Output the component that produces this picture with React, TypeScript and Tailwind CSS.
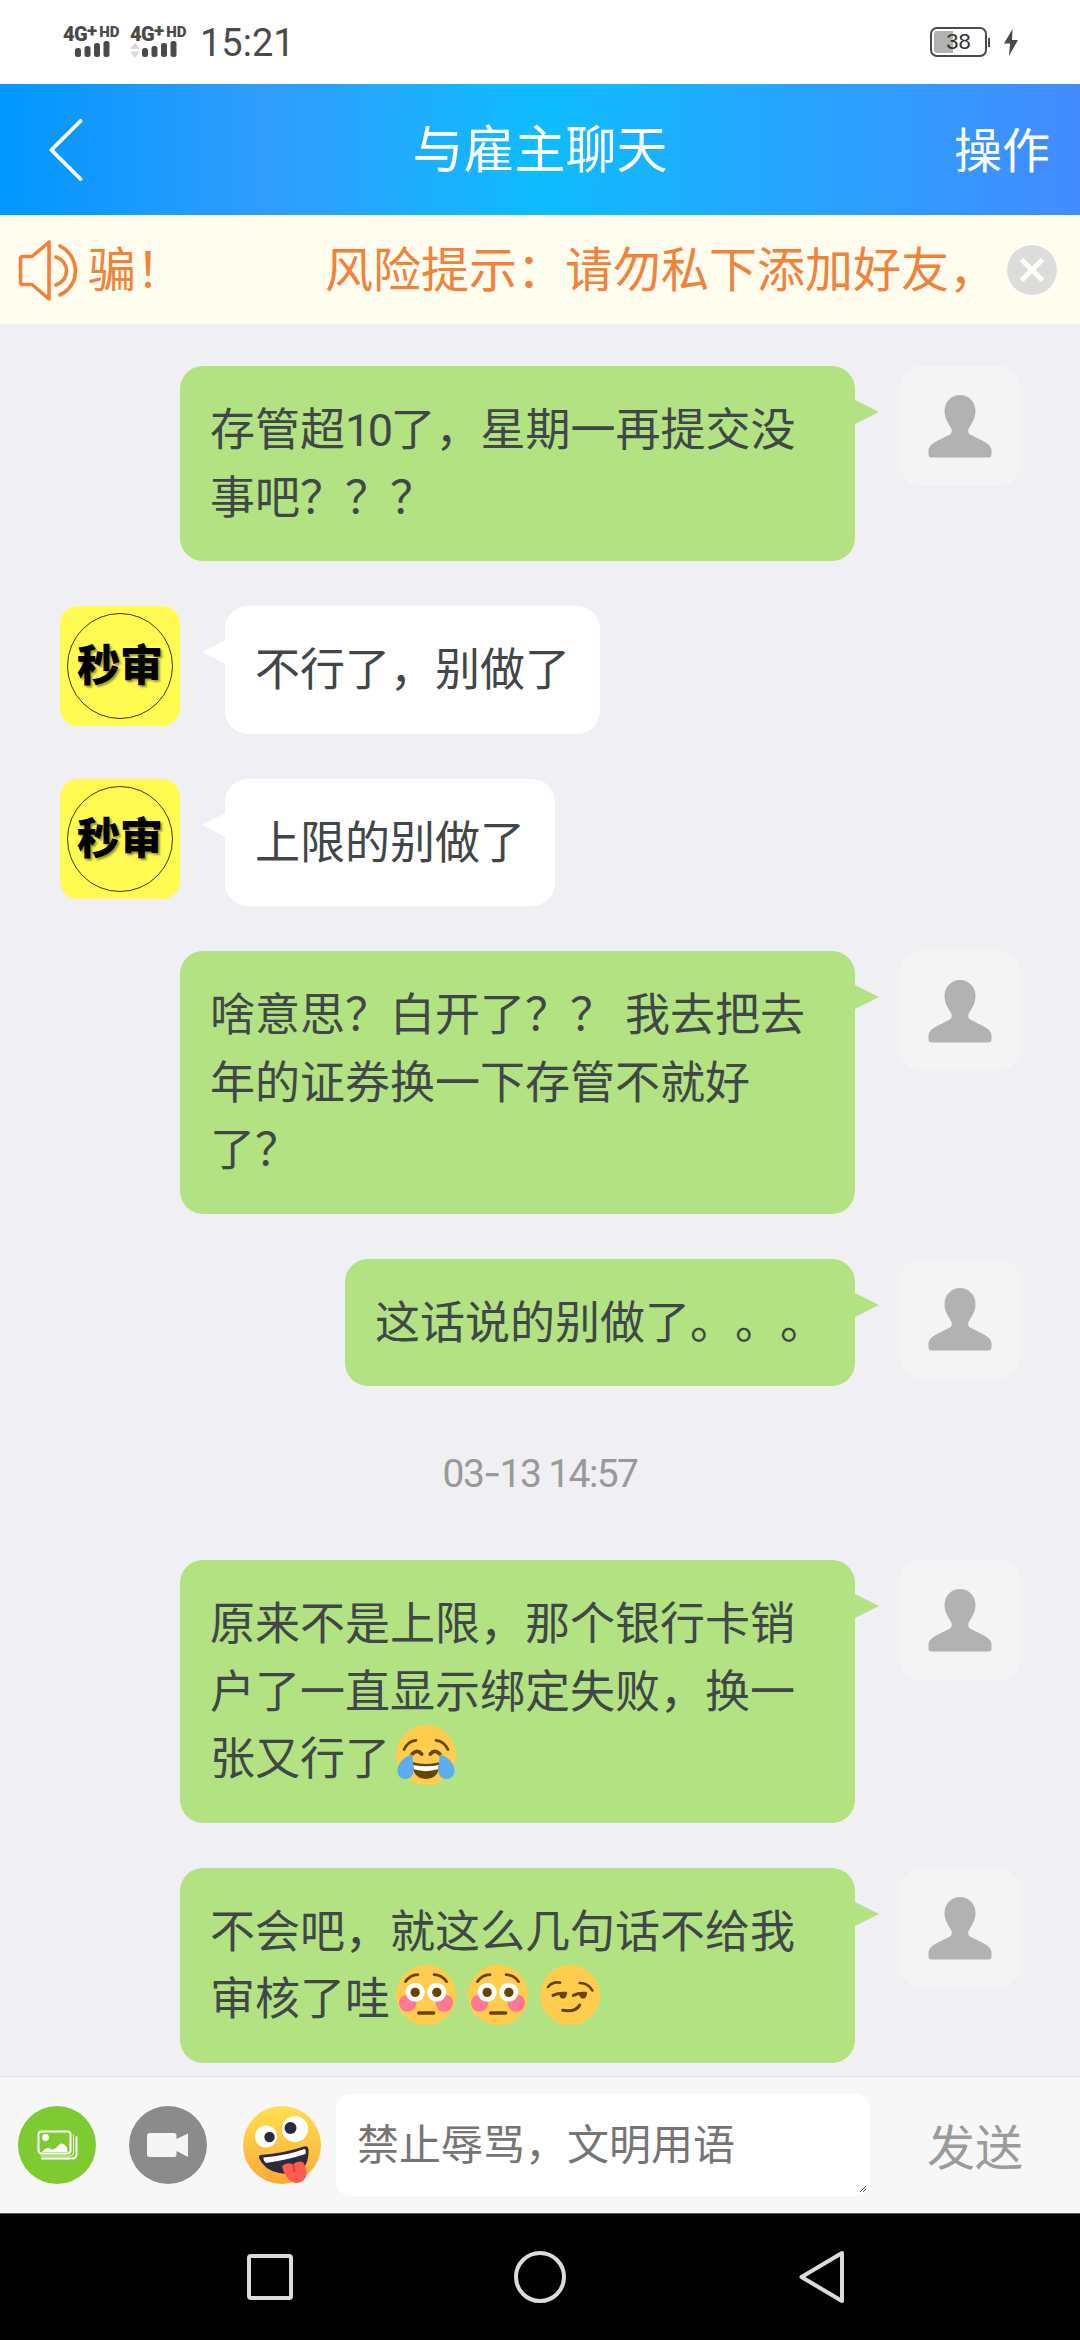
import type { ReactNode } from "react";

const Brows = ({ d }: { d: string }) => (
  <path d={d} fill="none" stroke="#664500" strokeWidth="1.6" strokeLinecap="round" />
);

function Emoji({ children }: { children: ReactNode }) {
  return (
    <svg viewBox="0 0 36 36" className="mx-[6px] mt-[3px] inline-block h-[60px] w-[60px] align-top">
      <circle cx="18" cy="18" r="18" fill="#ffcc4d" />
      {children}
    </svg>
  );
}

const Joy = () => (
  <Emoji>
    <Brows d="M4.800 14.800Q7.400 9.400 12 9.200M31.200 14.800Q28.600 9.400 24 9.200" />
    <path
      d="M9.600 17.600Q12.600 14.200 15.400 17.400M20.600 17.400Q23.400 14.200 26.400 17.600"
      fill="none"
      stroke="#664500"
      strokeWidth="2.200"
      strokeLinecap="round"
    />
    <path d="M10 22.400Q18 24.400 26 22.400C26.400 28.500 23.600 32.400 18 32.400S9.600 28.500 10 22.400Z" fill="#664500" />
    <path d="M10.300 24Q18 25.600 25.700 24L25.300 26.600Q18 28.800 10.700 26.600Z" fill="#fff" />
    <path d="M9.800 17.400C4 19.600 .8 23.400 .9 27.800C1 33.400 9 34.200 10.400 28.600C11 25.600 9.800 21.400 9.800 17.400Z" fill="#5dadec" />
    <path d="M26.200 17.400C32 19.600 35.200 23.400 35.100 27.800C35 33.400 27 34.200 25.600 28.600C25 25.600 26.200 21.400 26.200 17.400Z" fill="#5dadec" />
  </Emoji>
);

const Flushed = () => (
  <Emoji>
    <Brows d="M5.600 10Q8.400 6 13.200 5.800M30.400 10Q27.600 6 22.800 5.800" />
    <circle cx="7" cy="22.800" r="5.200" fill="#ff7892" />
    <circle cx="29" cy="22.800" r="5.200" fill="#ff7892" />
    <circle cx="11.500" cy="16.400" r="5.700" fill="#fff" />
    <circle cx="24.500" cy="16.400" r="5.700" fill="#fff" />
    <circle cx="11.500" cy="16.400" r="2.800" fill="#664500" />
    <circle cx="24.500" cy="16.400" r="2.800" fill="#664500" />
    <path d="M13.600 28.800H22.600" stroke="#664500" strokeWidth="2" strokeLinecap="round" />
  </Emoji>
);

const Smirk = () => (
  <Emoji>
    <Brows d="M4.800 13.200Q7.600 9.800 12 10.600M23.800 10.800Q28.600 10.600 31.400 15.200" />
    <g fill="none" stroke="#664500" strokeWidth="1.800" strokeLinecap="round">
      <path d="M7.800 18.200Q11 16.600 15.400 17" />
      <path d="M20 18.200Q23.200 16.600 27.400 17" />
      <path d="M13.600 27.200Q21.600 28.400 23.800 24" />
    </g>
    <path d="M11.400 16.800H16.200Q16 20.200 13.800 20.200T11.400 16.800ZM23.400 16.800H28.200Q28 20.200 25.800 20.200T23.400 16.800Z" fill="#664500" />
  </Emoji>
);

function ZanyFace() {
  return (
    <svg viewBox="0 0 78 78" className="ml-[36px] h-[78px] w-[78px] shrink-0">
      <defs>
        <linearGradient id="zany" x1="0" y1="0" x2="0" y2="1">
          <stop offset="0" stopColor="#ffdf4f" />
          <stop offset="0.45" stopColor="#fdc746" />
          <stop offset="1" stopColor="#ffa834" />
        </linearGradient>
      </defs>
      <circle cx="39" cy="39" r="39" fill="url(#zany)" />
      <circle cx="23" cy="30.500" r="11" fill="#fff" />
      <circle cx="52" cy="23" r="13" fill="#fff" />
      <circle cx="26.500" cy="31" r="5.200" fill="#2b2b3d" />
      <circle cx="47.500" cy="22" r="6" fill="#2b2b3d" />
      <path d="M18 49Q42 47 61 40.500Q65.500 39.500 65.500 44Q66 60 56 65Q46 69 36 67Q21 64 16 52Q15.500 49 18 49Z" fill="#2b2b3d" />
      <path d="M20.500 51.500Q44 49.500 61.500 43Q63.500 44 62.500 48Q44 54 23 57Q20 54 20.500 51.500Z" fill="#fff" />
      <path d="M39 60Q44 55.500 50 58.500Q54 54.500 60 56Q65 64 63 71Q59 77.500 52 77Q42 74 39 60Z" fill="#ff5b50" />
      <path d="M50 58.500L51.500 65" stroke="#d93a3a" strokeWidth="1.800" strokeLinecap="round" />
    </svg>
  );
}

function SelfAvatar() {
  return (
    <div className="ml-[45px] h-[120px] w-[120px] shrink-0 rounded-[21px] bg-[#f4f4f5]">
      <svg viewBox="0 0 120 120" className="h-full w-full">
        <path
          d="M60 29C69 29 75.500 36 75.500 45C75.500 52 72 57 69 62C67.500 65 68 67.500 71 69L84 75.500Q91 79.500 91.500 84V88.500Q91.500 91.500 88.500 91.500H31.500Q28.500 91.500 28.500 88.500V84Q29 79.500 36 75.500L49 69C52 67.500 52.500 65 51 62C48 57 44.500 52 44.500 45C44.500 36 51 29 60 29Z"
          fill="#b2b2b2"
        />
      </svg>
    </div>
  );
}

function EmployerAvatar() {
  return (
    <div className="mr-[45px] flex h-[120px] w-[120px] shrink-0 items-center justify-center rounded-[18px] bg-[#fffb50]">
      <div className="flex h-[106px] w-[106px] items-center justify-center rounded-full border border-[#3c3a12] pb-[7px] text-[43px] leading-none font-black whitespace-nowrap text-black [text-shadow:2px_2px_2px_rgba(90,90,20,0.6)]">
        秒审
      </div>
    </div>
  );
}

function Bubble({ mine, children }: { mine?: boolean; children: ReactNode }) {
  return (
    <div className={mine ? "flex justify-end px-[60px]" : "flex px-[60px]"}>
      {!mine && <EmployerAvatar />}
      <div
        className={
          mine
            ? "relative max-w-[675px] rounded-[23px] bg-[#b2e281] px-[30px] pt-[27px] pb-[33px]"
            : "relative max-w-[675px] rounded-[23px] bg-white px-[30px] pt-[27px] pb-[33px]"
        }
      >
        <svg
          viewBox="0 0 24 24"
          className={
            mine
              ? "absolute top-[34px] -right-[23.5px] h-[24px] w-[24px]"
              : "absolute top-[34px] -left-[23.5px] h-[24px] w-[24px] -scale-x-100"
          }
        >
          <path d="M0 0L24 12L0 24Z" fill={mine ? "#b2e281" : "#fff"} />
        </svg>
        <div className="text-[45px] leading-[67.5px] text-[#414649]">{children}</div>
      </div>
      {mine && <SelfAvatar />}
    </div>
  );
}

function Signal({ arrows }: { arrows?: boolean }) {
  return (
    <div className="mr-[8px] w-[59px] font-[Roboto] text-[#4a4a4a]">
      <div className="flex h-[15px] items-start whitespace-nowrap">
        <span className="text-[20px] leading-[17px] font-black tracking-[-0.6px]">4G</span>
        <span className="text-[19px] leading-[10px] font-black">+</span>
        <span className="ml-[2px] text-[15px] leading-[12px] font-black">HD</span>
      </div>
      <svg viewBox="0 0 58 17" className="h-[17px] w-[58px]">
        {arrows && <path d="M0 8L5 1.500L10 8ZM0 10.500H10L5 17Z" fill="#dadada" />}
        <rect x="12" y="7" width="6" height="9" rx="2.500" fill="#4a4a4a" />
        <rect x="21.500" y="5" width="6" height="11" rx="2.500" fill="#4a4a4a" />
        <rect x="31" y="2" width="6" height="14" rx="2.500" fill="#4a4a4a" />
        <rect x="40.500" y="0" width="6" height="16" rx="2.500" fill="#4a4a4a" />
      </svg>
    </div>
  );
}

function StatusBar() {
  return (
    <div className="flex h-[84px] shrink-0 items-center bg-white pr-[62px] pl-[63px]">
      <Signal />
      <Signal arrows />
      <span className="mt-[2px] ml-[3px] font-[Roboto] text-[38px] leading-none text-[#4a4a4a]">15:21</span>
      <div className="ml-auto flex items-center">
        <div className="relative flex h-[30px] w-[57px] items-center justify-center rounded-[7px] border-2 border-[#4a4a4a]">
          <div className="absolute top-[2px] left-[2px] h-[22px] w-[19px] rounded-l-[3px] bg-[#b2b2b2]" />
          <span className="relative font-['Liberation_Sans'] text-[22px] leading-none text-[#333]">38</span>
        </div>
        <div className="ml-px h-[9px] w-[2px] bg-[#4a4a4a]" />
        <svg viewBox="0 0 14 27" className="ml-[14px] h-[27px] w-[14px]">
          <path d="M8.500 0L0 14.500H6L5 27L14 11H8Z" fill="#4a4a4a" />
        </svg>
      </div>
    </div>
  );
}

export default function App() {
  return (
    <div className="flex h-[2340px] w-[1080px] flex-col overflow-hidden bg-[#efeff4] font-['Noto_Sans_CJK_SC',sans-serif] [text-spacing-trim:space-all]">
      <StatusBar />
      <header className="grid h-[131px] shrink-0 grid-cols-3 items-center bg-[linear-gradient(90deg,#0097ff_0%,#309dfd_25%,#0fbcff_50%,#428bff_100%)] text-white">
        <svg viewBox="0 0 34 62" className="ml-[49px] h-[62px] w-[34px]">
          <path d="M31.500 2L2.500 31L31.500 60" fill="none" stroke="#fff" strokeWidth="3.800" strokeLinecap="round" />
        </svg>
        <h1 className="pb-[6px] text-center text-[51px] leading-none">与雇主聊天</h1>
        <span className="pr-[30px] pb-[6px] text-right text-[48px] leading-none">操作</span>
      </header>
      <div className="flex h-[109px] shrink-0 items-center bg-[#fffdee] text-[48px] leading-none text-[#f0823c]">
        <svg viewBox="0 0 60 64" className="ml-[18px] h-[64px] w-[60px]" fill="none" stroke="#f0823c" strokeWidth="3.600" strokeLinejoin="round" strokeLinecap="round">
          <path d="M31 4V61L14 46.500H5Q2.500 46.500 2.500 44V21Q2.500 18.500 5 18.500H14Z" />
          <path d="M38 19C52 24 52 41 38 47M42 8C62 18 63 47 42 57" />
        </svg>
        <span className="ml-[10px] pb-[7px] whitespace-pre">骗！</span>
        <span className="ml-[141px] pb-[7px] whitespace-nowrap">风险提示：请勿私下添加好友，</span>
        <svg viewBox="0 0 50 50" className="ml-[10px] h-[50px] w-[50px] shrink-0">
          <circle cx="25" cy="25" r="25" fill="#dcdcdc" />
          <path d="M14.500 14.500L35.500 35.500M35.500 14.500L14.500 35.500" stroke="#fffdf8" strokeWidth="5" />
        </svg>
      </div>

      <main className="flex min-h-0 flex-1 flex-col gap-[45px] overflow-hidden pt-[42px]">
        <Bubble mine>
          存管超<span className="font-[Roboto] leading-none tracking-[-2.6px]">10</span>了，星期一再提交没事吧？？？
        </Bubble>
        <Bubble>不行了，别做了</Bubble>
        <Bubble>上限的别做了</Bubble>
        <Bubble mine>啥意思？白开了？？ 我去把去年的证券换一下存管不就好了？</Bubble>
        <Bubble mine>这话说的别做了。。。</Bubble>
        <div className="flex h-[84px] items-center justify-center">
          <span className="font-[Roboto] text-[39px] leading-none tracking-[-1.6px] whitespace-pre text-[#999]">
            03<span className="font-[Inter] leading-none">-</span>13 14:57
          </span>
        </div>
        <Bubble mine>
          原来不是上限，那个银行卡销户了一直显示绑定失败，换一张又行了
          <Joy />
        </Bubble>
        <Bubble mine>
          不会吧，就这么几句话不给我审核了哇
          <Flushed />
          <Flushed />
          <Smirk />
        </Bubble>
      </main>

      <footer className="flex h-[137px] shrink-0 items-center border-t border-[#e1e1e5] bg-[#f7f7f7]">
        <svg viewBox="0 0 78 78" className="ml-[18px] h-[78px] w-[78px] shrink-0">
          <circle cx="39" cy="39" r="39" fill="#7dca31" />
          <g fill="none" stroke="#fff" strokeWidth="2" strokeLinecap="round">
            <rect x="20.500" y="25.500" width="32" height="22" rx="3" />
            <path d="M58.500 31V48Q58.500 52.500 54 52.500H24" />
            <path d="M55.500 29V46.500Q55.500 50 52 50H23" strokeWidth="0.800" />
          </g>
          <circle cx="27.500" cy="31.500" r="3.400" fill="#fff" />
          <path d="M24 46Q28 40.500 32 42.500Q36 45 39 41Q42.500 35 47 39Q49.500 41 49.500 46Z" fill="#fff" />
        </svg>
        <svg viewBox="0 0 78 78" className="ml-[33px] h-[78px] w-[78px] shrink-0">
          <circle cx="39" cy="39" r="39" fill="#8b8b8b" />
          <path d="M21 27H45Q47.500 27 47.500 30V33L59 27.500V51L47.500 45V48.500Q47.500 51 45 51H21Q18 51 18 48.500V30Q18 27 21 27Z" fill="#f5f5f5" />
        </svg>
        <ZanyFace />
        <div className="relative ml-[15px] flex h-[102px] w-[534px] items-center rounded-[15px] bg-white pb-[6px] pl-[21px] text-[42px] leading-none text-[#757575]">
          禁止辱骂，文明用语
          <svg viewBox="0 0 6 6" className="absolute right-[4px] bottom-[4px] h-[6px] w-[6px]">
            <path d="M0 6L6 0M3 6L6 3" stroke="#555" strokeWidth="1" />
          </svg>
        </div>
        <span className="mb-[2px] ml-[57px] text-[48px] leading-none text-[#9b9b9b]">发送</span>
      </footer>

      <nav className="flex h-[127px] shrink-0 items-center justify-between border-t border-[#555] bg-black px-[234px]">
        <svg viewBox="0 0 66 60" className="h-[60px] w-[66px]">
          <rect x="15" y="9" width="42" height="42" rx="2" fill="none" stroke="#dcdcdc" strokeWidth="4" />
        </svg>
        <svg viewBox="0 0 66 60" className="h-[60px] w-[66px]">
          <circle cx="33" cy="30" r="24" fill="none" stroke="#dcdcdc" strokeWidth="4" />
        </svg>
        <svg viewBox="0 0 66 60" className="h-[60px] w-[66px]">
          <path d="M62 6V54L21.500 30Z" fill="none" stroke="#dcdcdc" strokeWidth="4" strokeLinejoin="round" />
        </svg>
      </nav>
    </div>
  );
}
